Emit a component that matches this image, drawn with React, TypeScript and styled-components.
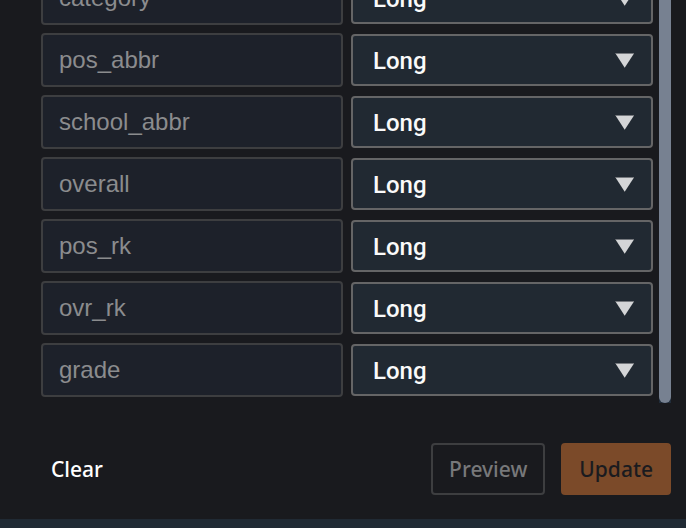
import React from "react";
import styled, { createGlobalStyle } from "styled-components";

const GlobalStyle = createGlobalStyle`
  * { box-sizing: border-box; }
  body {
    margin: 0;
    background: #191a1e;
    overflow: hidden;
  }
`;

const Panel = styled.main`
  display: flex;
  flex-direction: column;
  min-height: 100vh;
`;

const ScrollArea = styled.section`
  display: flex;
  gap: 6px;
  margin-top: -29px;
  padding: 0 15px 0 41px;
`;

const ColumnList = styled.div`
  flex: 1;
  min-width: 0;
  display: flex;
  flex-direction: column;
  gap: 8px;
  padding-bottom: 6px;
`;

const ColumnRow = styled.div`
  display: grid;
  grid-template-columns: 1fr 1fr;
  align-items: center;
  gap: 8px;
`;

const NameInput = styled.input`
  width: 100%;
  min-width: 0;
  height: 54px;
  padding: 0 16px;
  border: 2px solid #3d3e40;
  border-radius: 4px;
  background: #1d212a;
  color: #8b8c8e;
  -webkit-text-fill-color: #8b8c8e;
  opacity: 1;
  font: 24px/28px "Liberation Sans", Arial, sans-serif;
`;

const SelectBox = styled.div`
  position: relative;
  min-width: 0;
`;

const TypeSelect = styled.select`
  display: block;
  width: 100%;
  height: 52px;
  padding: 2px 48px 0 20px;
  border: 2px solid #656566;
  border-radius: 4px;
  appearance: none;
  background: #212932;
  color: #fafafa;
  font: 500 24px/28px Roboto, sans-serif;
`;

const Arrow = styled.svg`
  position: absolute;
  top: 18px;
  right: 18px;
  width: 20px;
  height: 16px;
  pointer-events: none;
`;

const ScrollTrack = styled.div`
  display: flex;
  width: 12px;
  background: #212d3b;
`;

const ScrollThumb = styled.div`
  flex: 1;
  border-radius: 6px;
  background: #778191;
`;

const Actions = styled.footer`
  display: flex;
  align-items: center;
  gap: 16px;
  padding: 40px 15px 24px 41px;
`;

const Button = styled.button<{ $kind: "text" | "outline" | "primary" }>`
  height: 52px;
  padding: 0 ${(p) => (p.$kind === "text" ? 8 : 16)}px;
  margin-right: ${(p) => (p.$kind === "text" ? "auto" : "0")};
  border: 2px solid
    ${(p) => ({ text: "transparent", outline: "#3d3e40", primary: "#7b4a29" })[p.$kind]};
  border-radius: 4px;
  background: ${(p) => (p.$kind === "primary" ? "#7b4a29" : "transparent")};
  color: ${(p) => ({ text: "#ffffff", outline: "#77787a", primary: "#1a1b1f" })[p.$kind]};
  font: 500 21px/28px "Noto Sans", "Open Sans", sans-serif;
`;

const BottomBar = styled.div`
  flex: 1;
  min-height: 9px;
  background: #202a34;
`;

const columns = ["category", "pos_abbr", "school_abbr", "overall", "pos_rk", "ovr_rk", "grade"];

export default function App() {
  return (
    <>
      <GlobalStyle />
      <Panel>
        <ScrollArea>
          <ColumnList>
            {columns.map((name) => (
              <ColumnRow key={name}>
                <NameInput aria-label={`${name} column name`} defaultValue={name} disabled />
                <SelectBox>
                  <TypeSelect aria-label={`${name} data type`} defaultValue="Long">
                    <option>Long</option>
                  </TypeSelect>
                  <Arrow viewBox="0 0 20 16" aria-hidden="true">
                    <path d="M0.5 1.5H19L9.7 15.8Z" fill="#d4d5d7" />
                    <path d="M0.5 1.5H19" stroke="#76797e" strokeWidth="1" />
                  </Arrow>
                </SelectBox>
              </ColumnRow>
            ))}
          </ColumnList>
          <ScrollTrack>
            <ScrollThumb />
          </ScrollTrack>
        </ScrollArea>
        <Actions>
          <Button type="button" $kind="text">Clear</Button>
          <Button type="button" $kind="outline" disabled>Preview</Button>
          <Button type="button" $kind="primary" disabled>Update</Button>
        </Actions>
        <BottomBar />
      </Panel>
    </>
  );
}
